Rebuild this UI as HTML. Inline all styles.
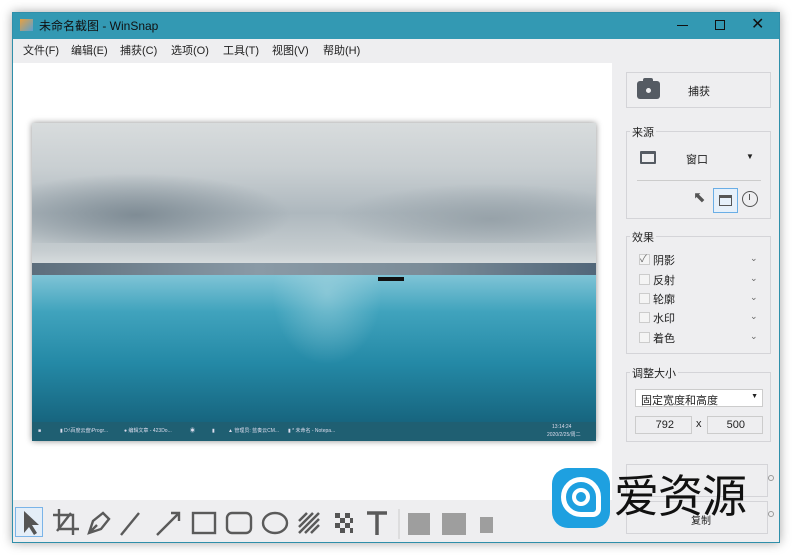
<!DOCTYPE html>
<html><head><meta charset="utf-8"><style>
*{margin:0;padding:0;box-sizing:border-box}
body{width:792px;height:555px;background:#fff;font-family:"Liberation Sans","Noto Sans CJK SC",sans-serif;font-size:11px;color:#222;position:relative;overflow:hidden}
.a{position:absolute}
#win{left:12px;top:12px;width:768px;height:531px;background:#eeeef0;border:1px solid #2f8faa;box-shadow:0 0 10px rgba(0,0,0,.35)}
#title{left:0;top:0;width:766px;height:26px;background:#3399b3;color:#111;font-size:12px}
#menu{left:0;top:26px;width:766px;height:24px;background:#eeeef0}
#menu span{position:absolute;top:3px;font-size:11px}
#canvas{left:0;top:50px;width:599px;height:437px;background:#fff}
.box{border:1px solid #d4d4d8}
.lbl{background:#eeeef0;padding:0 2px;font-size:11px}
.cb{width:11px;height:11px;border:1px solid #ccc;background:#f4f4f4}
.chev{font-size:9px;color:#666}
</style></head><body>
<div id="win" class="a">
 <div id="title" class="a">
  <div class="a" style="left:7px;top:6px;width:13px;height:12px;background:linear-gradient(135deg,#e8a040,#5aa0d0);"></div>
  <div class="a" style="left:26px;top:4px">未命名截图 - WinSnap</div>
  <div class="a" style="left:664px;top:12px;width:11px;height:1px;background:#111"></div>
  <div class="a" style="left:702px;top:7px;width:10px;height:10px;border:1px solid #111"></div>
  <div class="a" style="left:738px;top:2px;font-size:16px;line-height:20px">✕</div>
 </div>
 <div id="menu" class="a">
  <span style="left:10px">文件(F)</span><span style="left:58px">编辑(E)</span><span style="left:107px">捕获(C)</span><span style="left:158px">选项(O)</span><span style="left:210px">工具(T)</span><span style="left:259px">视图(V)</span><span style="left:310px">帮助(H)</span>
 </div>
 <div id="canvas" class="a">
  <div class="a" style="left:19px;top:60px;width:564px;height:318px;box-shadow:0 0 6px rgba(0,0,0,.45);overflow:hidden">
   <div class="a" style="left:0;top:0;width:564px;height:150px;background:linear-gradient(180deg,#d8dcdd 0%,#c9cfd2 30%,#aeb8be 60%,#c6cdd0 85%,#e2e5e6 100%)"></div>
   <div class="a" style="left:0;top:50px;width:260px;height:70px;background:radial-gradient(ellipse at 40% 60%,#7f8c95 0%,rgba(150,160,168,0) 70%)"></div>
   <div class="a" style="left:300px;top:60px;width:264px;height:60px;background:radial-gradient(ellipse at 60% 60%,#97a2a9 0%,rgba(160,170,175,0) 70%)"></div>
   <div class="a" style="left:0;top:140px;width:564px;height:12px;background:linear-gradient(90deg,#5d6e7c,#8a9aa6 40%,#7b8c98 70%,#52677a)"></div>
   <div class="a" style="left:0;top:152px;width:564px;height:147px;background:linear-gradient(180deg,#7fc4d6 0%,#40a3bd 25%,#2489a6 60%,#17657f 100%)"></div>
   <div class="a" style="left:240px;top:152px;width:110px;height:90px;background:radial-gradient(ellipse at 50% 20%,rgba(170,215,225,.55),rgba(170,215,225,0) 70%)"></div>
   <div class="a" style="left:346px;top:154px;width:26px;height:4px;background:#111"></div>
   <div class="a" style="left:0;top:299px;width:564px;height:19px;background:#1f5f72;color:#dde;font-size:5px;line-height:19px">
    <span class="a" style="left:6px">■</span><span class="a" style="left:28px">▮ D:\百度云盘\Progr...</span><span class="a" style="left:92px">● 编辑文章 - 423Do...</span><span class="a" style="left:158px">◉</span><span class="a" style="left:180px">▮</span><span class="a" style="left:196px">▲ 管理员: 蓝奏云CM...</span><span class="a" style="left:256px">▮ * 未命名 - Notepa...</span><span class="a" style="left:520px;top:-4px">13:14:24</span><span class="a" style="left:515px;top:4px">2020/2/25/周二</span>
   </div>
  </div>
 </div>
 <div class="a box" style="left:613px;top:59px;width:145px;height:36px">
  <div class="a" style="left:10px;top:8px;width:23px;height:18px;background:#555b63;border-radius:3px"></div>
  <div class="a" style="left:16px;top:5px;width:10px;height:4px;background:#555b63;border-radius:2px 2px 0 0"></div>
  <div class="a" style="left:17px;top:13px;width:9px;height:9px;border-radius:50%;background:#eeeef0;border:2px solid #555b63"></div>
  <div class="a" style="left:61px;top:10px">捕获</div>
 </div>
 <div class="a box" style="left:613px;top:118px;width:145px;height:88px">
  <div class="a lbl" style="left:3px;top:-8px">来源</div>
  <div class="a" style="left:13px;top:19px;width:16px;height:13px;border:2px solid #555b63;border-top-width:3px;border-radius:1px"></div>
  <div class="a" style="left:59px;top:19px">窗口</div>
  <div class="a" style="left:119px;top:20px;font-size:8px">▼</div>
  <div class="a" style="left:10px;top:48px;width:124px;height:1px;background:#ccc"></div>
  <div class="a" style="left:66px;top:56px;font-size:15px;color:#555">⬉</div>
  <div class="a" style="left:86px;top:56px;width:25px;height:25px;border:1px solid #6aaee6;background:#e6f0fa"></div>
  <div class="a" style="left:92px;top:63px;width:13px;height:11px;border:1.5px solid #555;border-top-width:3px"></div>
  <div class="a" style="left:115px;top:59px;width:16px;height:16px;border:1.5px solid #555;border-radius:50%"></div>
  <div class="a" style="left:122px;top:62px;width:1px;height:6px;background:#555"></div>
 </div>
 <div class="a box" style="left:613px;top:223px;width:145px;height:118px">
  <div class="a lbl" style="left:3px;top:-8px">效果</div>
  <div class="a cb" style="left:12px;top:17px;font-size:10px;line-height:9px;color:#666">✓</div><div class="a" style="left:26px;top:15px">阴影</div><div class="a chev" style="left:123px;top:16px">⌄</div>
  <div class="a cb" style="left:12px;top:37px"></div><div class="a" style="left:26px;top:35px">反射</div><div class="a chev" style="left:123px;top:36px">⌄</div>
  <div class="a cb" style="left:12px;top:56px"></div><div class="a" style="left:26px;top:54px">轮廓</div><div class="a chev" style="left:123px;top:55px">⌄</div>
  <div class="a cb" style="left:12px;top:75px"></div><div class="a" style="left:26px;top:73px">水印</div><div class="a chev" style="left:123px;top:74px">⌄</div>
  <div class="a cb" style="left:12px;top:95px"></div><div class="a" style="left:26px;top:93px">着色</div><div class="a chev" style="left:123px;top:94px">⌄</div>
 </div>
 <div class="a box" style="left:613px;top:359px;width:145px;height:70px">
  <div class="a lbl" style="left:3px;top:-8px">调整大小</div>
  <div class="a" style="left:8px;top:16px;width:128px;height:18px;background:#fff;border:1px solid #ccc;padding:2px 5px">固定宽度和高度<span style="position:absolute;right:4px;top:3px;font-size:7px">▼</span></div>
  <div class="a" style="left:8px;top:43px;width:57px;height:18px;border:1px solid #ccc;background:#eeeef0;text-align:right;padding:2px 17px 0 0">792</div>
  <div class="a" style="left:69px;top:45px">x</div>
  <div class="a" style="left:80px;top:43px;width:56px;height:18px;border:1px solid #ccc;background:#eeeef0;text-align:right;padding:2px 17px 0 0">500</div>
 </div>
 <div class="a box" style="left:613px;top:451px;width:142px;height:33px"></div>
 <div class="a box" style="left:613px;top:488px;width:142px;height:33px"><div class="a" style="left:64px;top:10px;font-size:10px">复制</div></div>
 <div class="a" style="left:755px;top:462px;width:6px;height:6px;border:1px solid #999;border-radius:50%"></div>
 <div class="a" style="left:755px;top:498px;width:6px;height:6px;border:1px solid #999;border-radius:50%"></div>
 <div class="a" style="left:2px;top:494px;width:28px;height:30px;border:1px solid #7ab4e8;background:#e4eef8"></div>
 <svg class="a" style="left:0;top:492px" width="480" height="36" viewBox="0 0 480 36" fill="none" stroke="#5a5a5a" stroke-width="2.4">
  <path d="M11 6 L11 28 L16 22 L21 30 L24 28 L19 20 L26 20 Z" fill="#555" stroke="none"/>
  <path d="M46 4 V24 H66 M40 10 H60 V30 M44 26 L58 8"/>
  <path d="M76 28 L80 16 L90 8 L96 14 L88 24 Z M76 28 L84 20"/>
  <path d="M108 30 L126 8"/>
  <path d="M144 30 L166 8 M158 8 H166 V16"/>
  <rect x="180" y="8" width="22" height="20"/>
  <rect x="214" y="8" width="24" height="20" rx="5"/>
  <ellipse cx="262" cy="18" rx="12" ry="10"/>
  <path d="M286 16 L294 8 M286 22 L300 8 M286 28 L306 8 M292 28 L306 14 M298 28 L306 20" stroke-width="2.5"/>
  <path d="M322 8h5v5h-5zM332 8h5v5h-5zM327 13h5v5h-5zM337 13h3v5h-3zM322 18h5v5h-5zM332 18h5v5h-5zM327 23h5v5h-5zM337 23h3v5h-3z" fill="#555" stroke="none"/>
  <path d="M354 8 H374 M364 8 V30" stroke-width="3.5"/>
  <path d="M386 4 V34" stroke="#ccc" stroke-width="1"/>
  <rect x="395" y="8" width="22" height="22" fill="#9e9e9e" stroke="none"/>
  <rect x="429" y="8" width="24" height="22" fill="#9e9e9e" stroke="none"/>
  <rect x="467" y="12" width="16" height="16" fill="#9e9e9e" stroke="none"/>
 </svg>
</div>
<div class="a" style="left:552px;top:468px;width:58px;height:60px;background:#1ea0e0;border-radius:16px"></div>
<div class="a" style="left:561px;top:477px;width:40px;height:40px;border:5px solid #fff;border-radius:50% 50% 8px 50%"></div>
<div class="a" style="left:572px;top:488px;width:18px;height:18px;border:4px solid #fff;border-radius:50%"></div>
<div class="a" style="left:614px;top:468px;font-size:45px;line-height:50px;color:#111;font-family:'Noto Sans CJK SC',sans-serif;font-weight:400;letter-spacing:-1px">爱资源</div>
</body></html>
